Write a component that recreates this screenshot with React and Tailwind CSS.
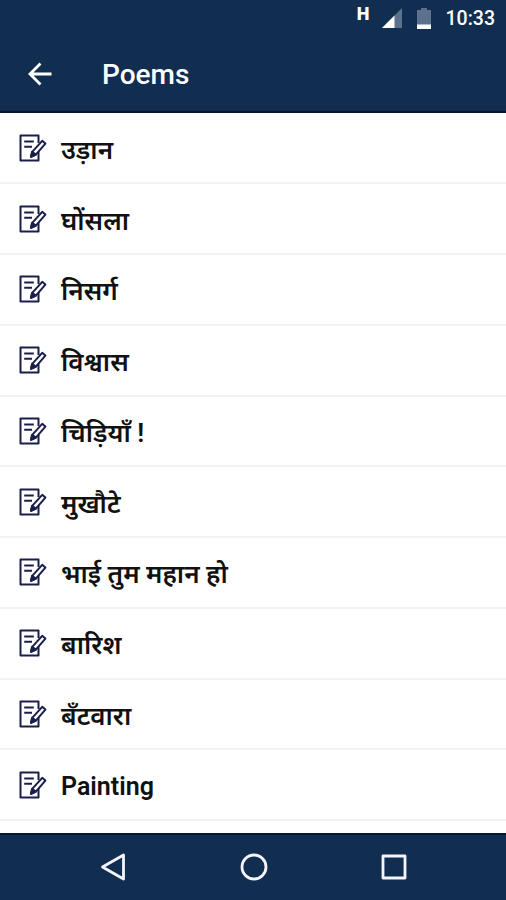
const poems = [
    "उड़ान",
    "घोंसला",
    "निसर्ग",
    "विश्वास",
    "चिड़ियाँ !",
    "मुखौटे",
    "भाई तुम महान हो",
    "बारिश",
    "बँटवारा",
    "Painting",
];

function PoemIcon() {
    return (
        <svg
            width="28"
            height="28"
            viewBox="0 0 28 28"
            fill="none"
            stroke="#191f4a"
            strokeWidth="2"
            strokeLinejoin="round"
            className="shrink-0"
        >
            <path d="M19.5 9V1.5H1.5V26.5H19.5V17" />
            <path d="M5.2 7.5H14.8M5.2 12.8H13" />
            <path d="M23.2 6.8L26.4 9.6L16.8 20.6L12 22.8L13.2 17.8Z" fill="#fff" />
            <path d="M13.2 17.8L12 22.8L16.8 20.6Z" fill="#191f4a" />
        </svg>
    );
}

function StatusBar() {
    return (
        <div className="flex h-[36px] items-center justify-end pr-[11px] text-white">
            <span className="mr-[12px] mb-[9px] text-[18px] leading-none font-black">H</span>
            <svg width="20" height="20" viewBox="0 0 20 20" className="mr-[15px]">
                <path d="M20 0V20H0Z" fill="#5c728c" />
                <path d="M12.5 7.5V20H0Z" fill="#fff" />
            </svg>
            <svg width="14" height="21" viewBox="0 0 14 21" className="mr-[15px]">
                <path d="M4 0H10V2H14V21H0V2H4Z" fill="#5c728c" />
                <path d="M0 16.5H14V21H0Z" fill="#fff" />
            </svg>
            <span className="pt-[2px] text-[19.5px] leading-none font-medium">10:33</span>
        </div>
    );
}

function AppBar() {
    return (
        <div className="flex h-[77px] items-center border-b-2 border-[#06142e] pl-[28px] text-white">
            <svg width="24" height="24" viewBox="0 0 24 24" fill="none" stroke="#fff" strokeWidth="2.8">
                <path d="M23.5 12H2.5M12.5 1.5L2 12L12.5 22.5" />
            </svg>
            <h1 className="ml-[50px] pt-[2px] text-[28px] leading-none font-medium">Poems</h1>
        </div>
    );
}

function NavBar() {
    return (
        <div className="flex h-[67px] shrink-0 items-center justify-between border-t-2 border-[#06143a] bg-[#112d4f] pr-[98px] pb-[2px] pl-[99px]">
            <svg width="28" height="28" viewBox="0 0 28 28" fill="none" stroke="#f4f5fa" strokeWidth="2.8" strokeLinejoin="round">
                <path d="M24.5 2V26L3.5 14Z" />
            </svg>
            <svg width="28" height="28" viewBox="0 0 28 28" fill="none" stroke="#f4f5fa" strokeWidth="2.8">
                <circle cx="14" cy="14" r="12" />
            </svg>
            <svg width="28" height="28" viewBox="0 0 28 28" fill="none" stroke="#f4f5fa" strokeWidth="2.8" strokeLinejoin="round">
                <rect x="3" y="3" width="22" height="22" />
            </svg>
        </div>
    );
}

export default function App() {
    return (
        <div className="flex h-[900px] w-[506px] flex-col overflow-hidden bg-white font-['Roboto','Noto_Sans_Devanagari',sans-serif]">
            <header className="shrink-0 bg-[#112d4f]">
                <StatusBar />
                <AppBar />
            </header>
            <ul className="min-h-0 flex-1 overflow-hidden pt-[0.6px]">
                {poems.map((poem) => (
                    <li
                        key={poem}
                        className="flex h-[70.75px] items-center border-b-2 border-[#f2f2f2] pl-[19px]"
                    >
                        <PoemIcon />
                        <span
                            className={
                                poem === "Painting"
                                    ? "ml-[14px] pt-[4px] text-[25px] leading-none font-semibold text-[#111]"
                                    : "ml-[14px] pt-[4px] text-[26px] leading-none font-semibold text-[#111]"
                            }
                        >
                            {poem}
                        </span>
                    </li>
                ))}
            </ul>
            <NavBar />
        </div>
    );
}
